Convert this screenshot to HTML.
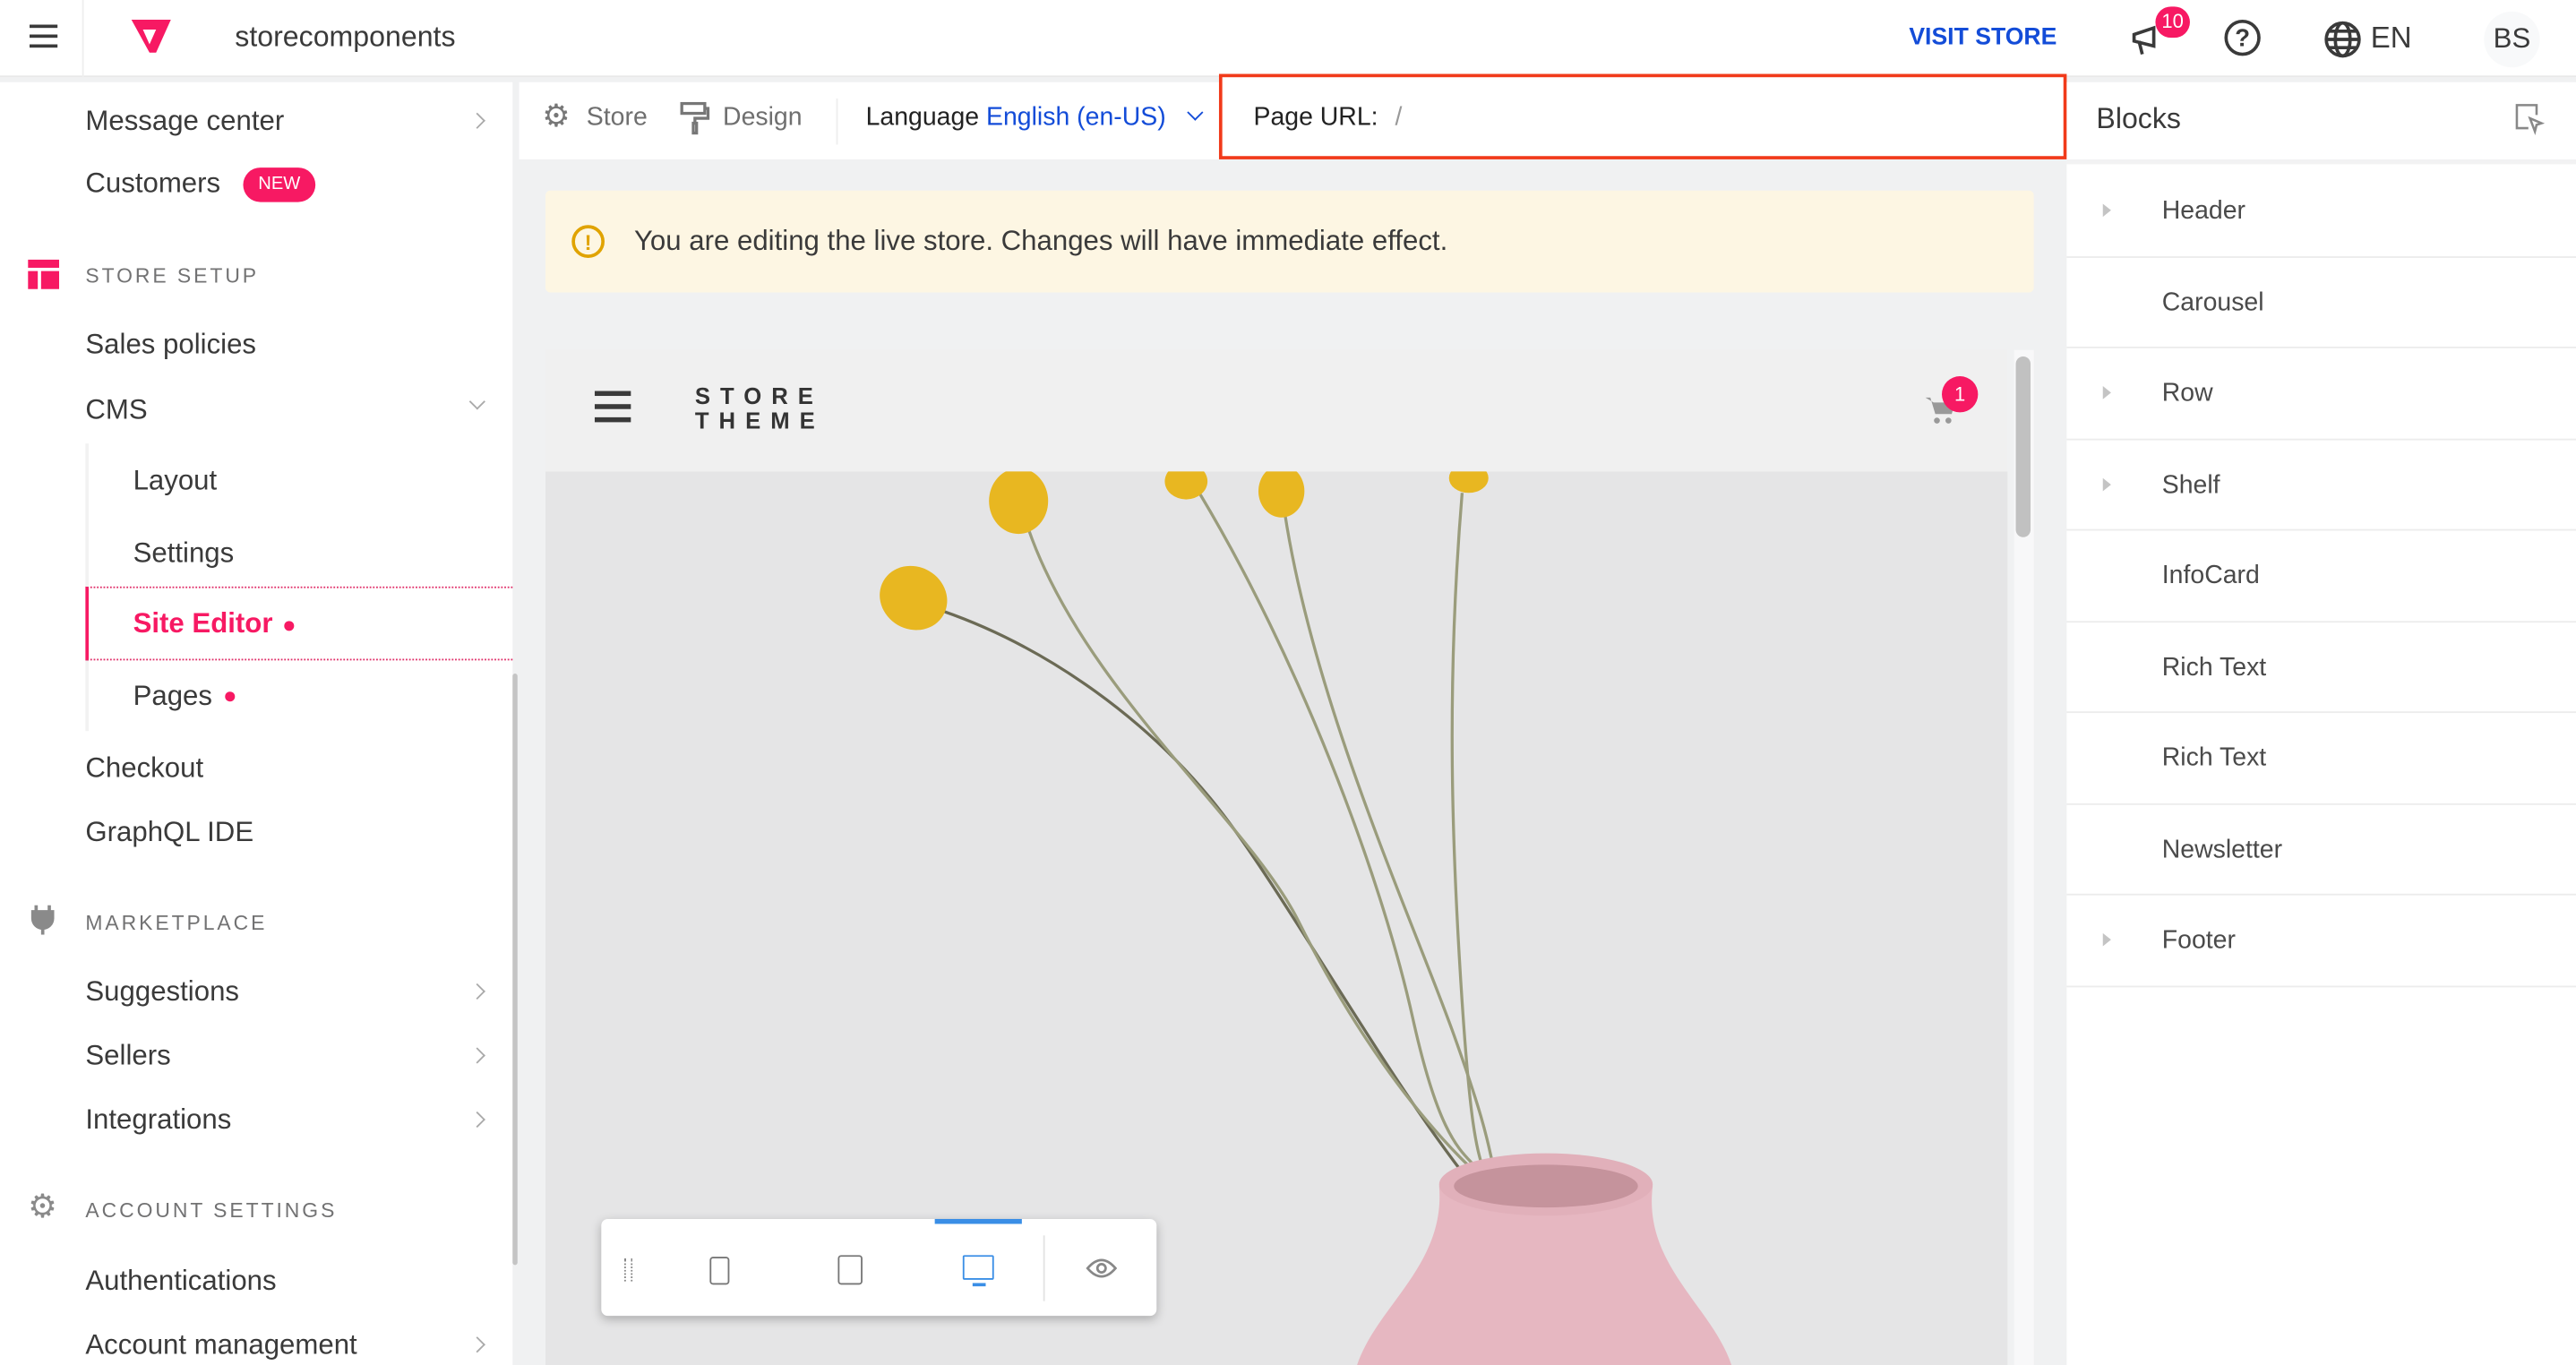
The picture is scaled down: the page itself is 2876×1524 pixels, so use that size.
<!DOCTYPE html>
<html><head><meta charset="utf-8"><style>
*{box-sizing:border-box;margin:0;padding:0}
html,body{width:2876px;height:1524px;overflow:hidden;background:#fff}
#w{position:absolute;left:0;top:0;width:1568px;height:831px;transform:scale(1.83418);transform-origin:0 0;font-family:"Liberation Sans",sans-serif;color:#3f3f40;background:#f0f1f2}
.a{position:absolute}
.si{position:absolute;left:52px;font-size:17px;color:#3a3a3a;white-space:nowrap}
.sec{position:absolute;left:52px;font-size:12.5px;letter-spacing:1.6px;color:#727273}
.chev{position:absolute;left:287px;width:7px;height:7px;border-right:1.5px solid #aaa;border-top:1.5px solid #aaa;transform:rotate(45deg)}
.blk{position:absolute;left:1258px;width:310px;height:55.5px;border-bottom:1px solid #ececec;font-size:15.5px;color:#4a4a4a}
.blk span{position:absolute;left:58px;top:19px}
.tri{position:absolute;left:22px;top:23px;width:0;height:0;border-left:5px solid #c4c4c4;border-top:4.5px solid transparent;border-bottom:4.5px solid transparent}
</style></head><body><div id="w">
<div class="a" style="left:0;top:0;width:1568px;height:47px;background:#fff;border-bottom:1px solid #e8e8e8"></div>
<div class="a" style="left:50px;top:0;width:1px;height:47px;background:#eee"></div>
<div class="a" style="left:18px;top:15px;width:17px;height:2px;background:#3a3a3a;box-shadow:0 6px 0 #3a3a3a,0 12px 0 #3a3a3a"></div>
<svg class="a" style="left:78px;top:10px" width="28" height="24" viewBox="0 0 28 24"><path d="M2 2h24l-9 20h-4z" fill="#f71963"/><path d="M9 8h8l-4 9z" fill="#fff"/></svg>
<div class="a" style="left:143px;top:12px;font-size:17.5px;color:#3a3a3a">storecomponents</div>
<div class="a" style="left:1162px;top:15px;font-size:14.5px;font-weight:bold;color:#134cd8">VISIT STORE</div>
<svg class="a" style="left:1296px;top:13px" width="22" height="22" viewBox="0 0 22 22" fill="none" stroke="#3a3a3a" stroke-width="2"><path d="M3 8l12-4v11L3 12z M6 12l2 8"/></svg>
<div class="a" style="left:1312px;top:4px;width:21px;height:19px;border-radius:10px;background:#f71963;color:#fff;font-size:12px;text-align:center;line-height:19px">10</div>
<div class="a" style="left:1354px;top:12px;width:22px;height:22px;border:2px solid #3a3a3a;border-radius:50%;font-size:15px;font-weight:bold;text-align:center;line-height:19px;color:#3a3a3a">?</div>
<svg class="a" style="left:1414px;top:12px" width="24" height="24" viewBox="0 0 24 24" fill="none" stroke="#3a3a3a" stroke-width="2"><circle cx="12" cy="12" r="10"/><ellipse cx="12" cy="12" rx="4.5" ry="10"/><path d="M2 12h20M4 7h16M4 17h16"/></svg>
<div class="a" style="left:1443px;top:13px;font-size:18px;color:#3a3a3a">EN</div>
<div class="a" style="left:1512px;top:7px;width:34px;height:34px;border-radius:50%;background:#f8f9fa;font-size:17px;text-align:center;line-height:34px;color:#3a3a3a">BS</div>
<div class="a" style="left:0;top:50px;width:312px;height:781px;background:#fff"></div>
<div class="a" style="left:312px;top:410px;width:3px;height:360px;background:#c4c4c4;border-radius:2px"></div>
<div class="si" style="top:64px">Message center</div><div class="chev" style="top:70px"></div>
<div class="si" style="top:102px">Customers</div>
<div class="a" style="left:148px;top:102px;width:44px;height:21px;border-radius:11px;background:#f71963;color:#fff;font-size:11px;text-align:center;line-height:21px">NEW</div>
<svg class="a" style="left:17px;top:158px" width="19" height="18"><rect x="0" y="0" width="19" height="5" fill="#f71963"/><rect x="0" y="7" width="6" height="11" fill="#f71963"/><rect x="8" y="7" width="11" height="11" fill="#f71963"/></svg>
<div class="sec" style="top:161px">STORE SETUP</div>
<div class="si" style="top:200px">Sales policies</div>
<div class="si" style="top:240px">CMS</div><div class="chev" style="top:241px;transform:rotate(135deg)"></div>
<div class="a" style="left:52px;top:270px;width:2px;height:175px;background:#f2f2f2"></div>
<div class="si" style="left:81px;top:283px">Layout</div>
<div class="si" style="left:81px;top:327px">Settings</div>
<div class="a" style="left:52px;top:357px;width:260px;height:45px;border-top:1px dotted #e0306a;border-bottom:1px dotted #e0306a;border-left:2px solid #f71963"></div>
<div class="si" style="left:81px;top:370px;color:#f71963;font-weight:bold">Site Editor</div>
<div class="a" style="left:173px;top:378px;width:6px;height:6px;border-radius:50%;background:#f71963"></div>
<div class="si" style="left:81px;top:414px">Pages</div>
<div class="a" style="left:137px;top:421px;width:6px;height:6px;border-radius:50%;background:#f71963"></div>
<div class="si" style="top:458px">Checkout</div>
<div class="si" style="top:497px">GraphQL IDE</div>
<svg class="a" style="left:17px;top:551px" width="18" height="18" viewBox="0 0 18 18"><path d="M2 3h14v5a7 7 0 0 1-14 0z M8 14h2v4h-2z M4 0h2v4H4z M12 0h2v4h-2z" fill="#8a8a8a"/></svg>
<div class="sec" style="top:555px">MARKETPLACE</div>
<div class="si" style="top:594px">Suggestions</div><div class="chev" style="top:600px"></div>
<div class="si" style="top:633px">Sellers</div><div class="chev" style="top:639px"></div>
<div class="si" style="top:672px">Integrations</div><div class="chev" style="top:678px"></div>
<div class="a" style="left:17px;top:726px;width:18px;height:18px;color:#8a8a8a;font-size:20px;line-height:18px">⚙</div>
<div class="sec" style="top:730px">ACCOUNT SETTINGS</div>
<div class="si" style="top:770px">Authentications</div>
<div class="si" style="top:809px">Account management</div><div class="chev" style="top:815px"></div>
<div class="a" style="left:316px;top:50px;width:940px;height:47px;background:#fff"></div>
<div class="a" style="left:330px;top:60px;font-size:19px;color:#777">⚙</div>
<div class="a" style="left:357px;top:63px;font-size:15.5px;color:#6f6f6f">Store</div>
<svg class="a" style="left:414px;top:62px" width="18" height="20" viewBox="0 0 18 20" fill="none" stroke="#777" stroke-width="1.8"><rect x="1" y="1" width="14" height="6"/><path d="M15 4h2v6H9v3M8 13h2v6H8z"/></svg>
<div class="a" style="left:440px;top:63px;font-size:15.5px;color:#6f6f6f">Design</div>
<div class="a" style="left:509px;top:60px;width:1px;height:28px;background:#eee"></div>
<div class="a" style="left:527px;top:63px;font-size:15.5px;color:#222">Language <span style="color:#134cd8">English (en-US)</span></div>
<div class="a" style="left:724px;top:65px;width:7px;height:7px;border-right:1.6px solid #134cd8;border-bottom:1.6px solid #134cd8;transform:rotate(45deg)"></div>
<div class="a" style="left:742px;top:45px;width:516px;height:52px;border:2.5px solid #f13a1a;background:#fff"></div>
<div class="a" style="left:763px;top:63px;font-size:15.5px;color:#222">Page URL: <span style="color:#999;margin-left:6px">/</span></div>
<div class="a" style="left:332px;top:116px;width:906px;height:62px;background:#fdf6e3;border-radius:3px"></div>
<div class="a" style="left:348px;top:137px;width:20px;height:20px;border:2px solid #e0a300;border-radius:50%;color:#e0a300;font-size:13px;font-weight:bold;text-align:center;line-height:17px">!</div>
<div class="a" style="left:386px;top:137px;font-size:17px;color:#3a3a3a">You are editing the live store. Changes will have immediate effect.</div>
<div class="a" style="left:332px;top:213px;width:890px;height:74px;background:#f0f0f0"></div>
<div class="a" style="left:362px;top:238px;width:22px;height:2.5px;background:#3a3a3a;box-shadow:0 8px 0 #3a3a3a,0 16px 0 #3a3a3a"></div>
<div class="a" style="left:423px;top:234px;font-size:14px;font-weight:bold;letter-spacing:6px;line-height:15px;color:#333">STORE<br>THEME</div>
<svg class="a" style="left:1170px;top:240px" width="22" height="20" viewBox="0 0 22 20"><path d="M2 2h3l3 10h10l2-7H7" fill="#999"/><circle cx="9" cy="16" r="1.8" fill="#999"/><circle cx="16" cy="16" r="1.8" fill="#999"/></svg>
<div class="a" style="left:1182px;top:229px;width:22px;height:22px;border-radius:50%;background:#f71963;color:#fff;font-size:12px;text-align:center;line-height:22px">1</div>
<div class="a" style="left:1226px;top:213px;width:12px;height:618px;background:#f8f8f9"></div>
<div class="a" style="left:1227px;top:217px;width:9px;height:110px;background:#c1c1c1;border-radius:5px"></div>
<svg class="a" style="left:332px;top:287px" width="890" height="544" viewBox="332 287 890 544">
<rect x="332" y="287" width="890" height="544" fill="#e5e5e6"/>
<g fill="none" stroke="#9a9c7c" stroke-width="1.8">
<path d="M574 372C640 395 700 440 740 490S840 650 895 720" stroke="#6b6a55"/>
<path d="M626 322C660 420 760 500 790 560S860 680 905 720"/>
<path d="M730 300C790 400 840 530 860 620S895 700 905 720"/>
<path d="M782 312C800 430 860 560 885 630S905 700 912 720"/>
<path d="M890 300C880 420 884 520 890 610S900 700 905 720"/>
</g>
<g fill="#e8b721">
<ellipse cx="556" cy="364" rx="21" ry="19" transform="rotate(30 556 364)"/>
<ellipse cx="620" cy="305" rx="18" ry="20"/>
<ellipse cx="722" cy="293" rx="13" ry="11"/>
<ellipse cx="780" cy="299" rx="14" ry="16"/>
<ellipse cx="894" cy="291" rx="12" ry="9"/>
</g>
<path d="M876 722C880 770 838 795 826 831H1054C1042 795 1000 770 1006 722Z" fill="#e6b7c1"/>
<ellipse cx="941" cy="721" rx="65" ry="19" fill="#e1b0ba"/>
<ellipse cx="941" cy="722" rx="56" ry="13" fill="#c5939c"/>
</svg>
<div class="a" style="left:366px;top:742px;width:338px;height:59px;background:#fff;border-radius:4px;box-shadow:0 2px 6px rgba(0,0,0,.25)"></div>
<div class="a" style="left:569px;top:742px;width:53px;height:3px;background:#3a8ee6"></div>
<div class="a" style="left:380px;top:766px;width:5px;height:14px;border-left:1.5px dotted #888;border-right:1.5px dotted #888"></div>
<div class="a" style="left:432px;top:765px;width:12px;height:17px;border:1.5px solid #777;border-radius:2px"></div>
<div class="a" style="left:510px;top:764px;width:15px;height:18px;border:1.5px solid #777;border-radius:2px"></div>
<div class="a" style="left:586px;top:764px;width:19px;height:15px;border:1.8px solid #3a8ee6;border-radius:1px"></div>
<div class="a" style="left:592px;top:781px;width:8px;height:2px;background:#3a8ee6"></div>
<div class="a" style="left:635px;top:752px;width:1px;height:40px;background:#e3e3e3"></div>
<svg class="a" style="left:661px;top:765px" width="19" height="14" viewBox="0 0 19 14" fill="none" stroke="#888" stroke-width="1.5"><path d="M1 7Q9.5-3 18 7Q9.5 17 1 7z"/><circle cx="9.5" cy="7" r="2.5"/></svg>
<div class="a" style="left:1258px;top:50px;width:310px;height:781px;background:#fff"></div>
<div class="a" style="left:1258px;top:97px;width:310px;height:3px;background:#f2f2f3"></div>
<div class="a" style="left:1276px;top:62px;font-size:17.5px;color:#3a3a3a">Blocks</div>
<svg class="a" style="left:1530px;top:62px" width="20" height="22" viewBox="0 0 20 22" fill="none" stroke="#888" stroke-width="1.4"><path d="M9 16H2V2h12v6"/><path d="M10 10l7 3-3 1-1 4z"/></svg>
<div class="blk" style="top:101px"><div class="tri"></div><span>Header</span></div>
<div class="blk" style="top:156.5px"><span>Carousel</span></div>
<div class="blk" style="top:212px"><div class="tri"></div><span>Row</span></div>
<div class="blk" style="top:267.5px"><div class="tri"></div><span>Shelf</span></div>
<div class="blk" style="top:323px"><span>InfoCard</span></div>
<div class="blk" style="top:378.5px"><span>Rich Text</span></div>
<div class="blk" style="top:434px"><span>Rich Text</span></div>
<div class="blk" style="top:489.5px"><span>Newsletter</span></div>
<div class="blk" style="top:545px"><div class="tri"></div><span>Footer</span></div>
</div></body></html>
